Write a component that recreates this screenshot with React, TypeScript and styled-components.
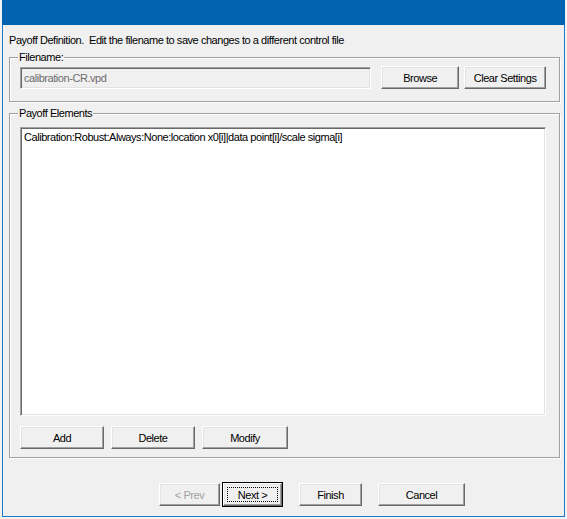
import { FC } from "react";
import styled, { createGlobalStyle } from "styled-components";

const GlobalStyle = createGlobalStyle`
  body {
    margin: 0;
    background: #f3f3f3;
    font-family: "Liberation Sans", Arial, sans-serif;
    font-size: 11px;
    letter-spacing: -0.45px;
    color: #000;
  }
`

const Window = styled.div`
  margin-left: 2px;
  width: 563px;
  height: 517px;
  box-sizing: border-box;
  border: 1px solid #1979ca;
  border-top: none;
  background: #f0f0f0;
  display: flex;
  flex-direction: column;
`

const TitleBar = styled.div`
  height: 25px;
  margin: 0 -1px;
  background: #0063b1;
`

const Body = styled.div`
  flex: 1;
  display: flex;
  flex-direction: column;
  padding: 9px 4px 0 6px;
`

const Intro = styled.div`
  line-height: 13px;
  white-space: pre;
`

const Group = styled.fieldset<{ gap: number }>`
  margin: ${p => p.gap}px 0 0 0;
  padding: 0;
  border: 1px solid #a0a0a0;
  box-shadow: inset 1px 1px #fff, 1px 1px #fff;
  min-width: 0;
`

const Legend = styled.legend`
  margin-left: 8px;
  padding: 0 1px;
  line-height: 13px;
`

const FileRow = styled.div`
  display: flex;
  align-items: center;
  padding: 2px 13px 12px 10px;
`

const TextBox = styled.div`
  width: 352px;
  height: 22px;
  box-sizing: border-box;
  margin-right: 10px;
  padding: 2px 3px;
  border: 1px solid;
  border-color: #a0a0a0 #fff #fff #a0a0a0;
  box-shadow: inset 1px 1px #696969, inset -1px -1px #e3e3e3;
  color: #6d6d6d;
  line-height: 16px;
`

const Button = styled.button<{ w: number; disabled?: boolean }>`
  position: relative;
  width: ${p => p.w}px;
  height: 23px;
  padding: 0;
  box-sizing: border-box;
  font: inherit;
  letter-spacing: inherit;
  color: ${p => (p.disabled ? "#a0a0a0" : "#000")};
  background: #f0f0f0;
  border: 1px solid;
  border-color: #fff #696969 #696969 #fff;
  box-shadow: inset -1px -1px #a0a0a0, inset 1px 1px #e3e3e3;
`

const DefaultButton = styled(Button)`
  outline: 1px solid #000;
  outline-offset: 0;
  &::after {
    content: "";
    position: absolute;
    inset: 3px;
    border: 1px dotted #000;
  }
`

const ListWrap = styled.div`
  display: flex;
  flex-direction: column;
  padding: 7px 13px 8px 10px;
`

const ListBox = styled.div`
  height: 289px;
  box-sizing: border-box;
  border: 1px solid;
  border-color: #a0a0a0 #fff #fff #a0a0a0;
  box-shadow: inset 1px 1px #696969, inset -1px -1px #e3e3e3;
  background: #fff;
  padding: 2px 3px;
  line-height: 14px;
`

const EditRow = styled.div`
  display: flex;
  gap: 7px;
  margin-top: 10px;
`

const NavRow = styled.div`
  display: flex;
  margin-top: 25px;
  padding-left: 150px;
`

const NavSpace = styled.div<{ w: number }>`
  width: ${p => p.w}px;
`

const App: FC = () => {
  return (
    <>
      <GlobalStyle />
      <Window>
        <TitleBar />
        <Body>
          <Intro>Payoff Definition.  Edit the filename to save changes to a different control file</Intro>
          <Group gap={4}>
            <Legend>Filename:</Legend>
            <FileRow>
              <TextBox>calibration-CR.vpd</TextBox>
              <Button w={78}>Browse</Button>
              <NavSpace w={5} />
              <Button w={82}>Clear Settings</Button>
            </FileRow>
          </Group>
          <Group gap={5}>
            <Legend>Payoff Elements</Legend>
            <ListWrap>
              <ListBox>Calibration:Robust:Always:None:location x0[i]|data point[i]/scale sigma[i]</ListBox>
              <EditRow>
                <Button w={84}>Add</Button>
                <Button w={84}>Delete</Button>
                <Button w={86}>Modify</Button>
              </EditRow>
            </ListWrap>
          </Group>
          <NavRow>
            <Button w={61} disabled>&lt; Prev</Button>
            <NavSpace w={3} />
            <DefaultButton w={59}>Next &gt;</DefaultButton>
            <NavSpace w={17} />
            <Button w={63}>Finish</Button>
            <NavSpace w={16} />
            <Button w={87}>Cancel</Button>
          </NavRow>
        </Body>
      </Window>
    </>
  )
}

export default App;
